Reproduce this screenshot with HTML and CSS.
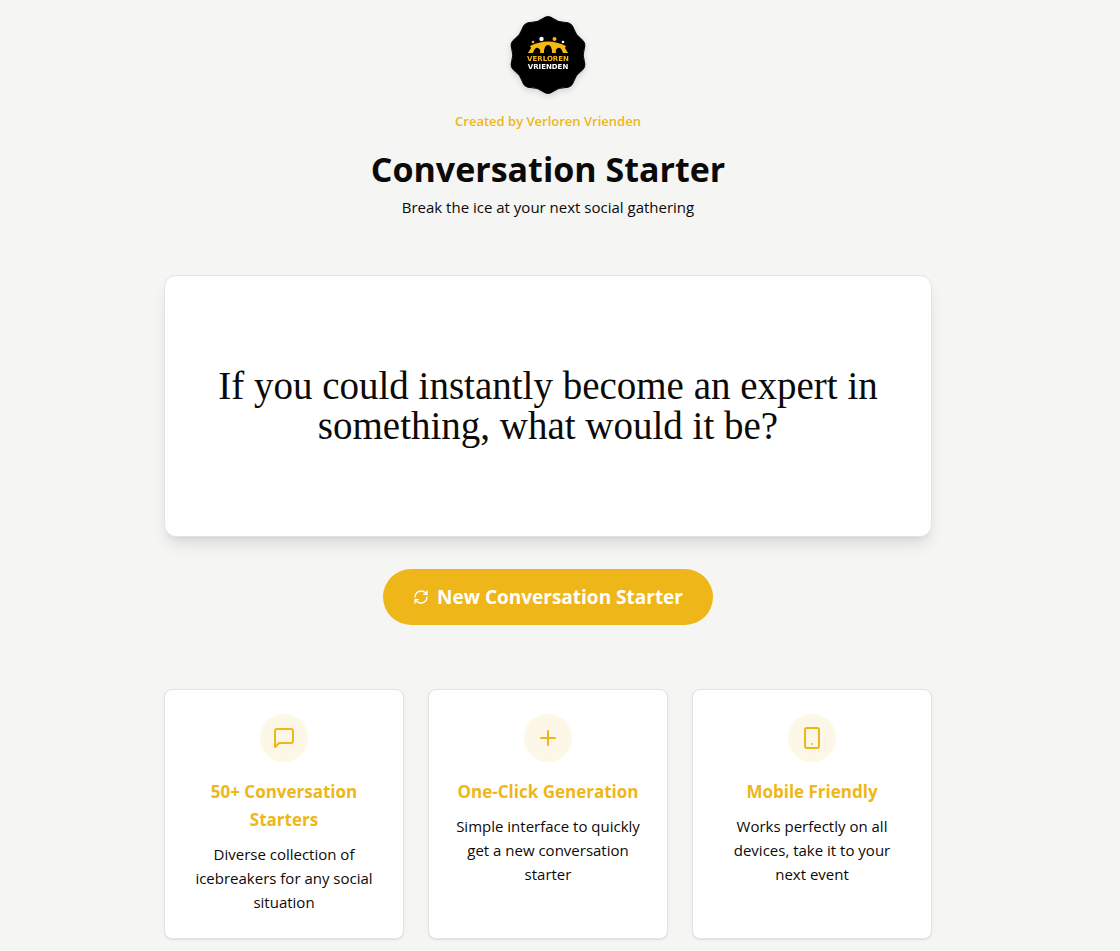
FILE: index.html
```html
<!DOCTYPE html>
<html lang="en">
<head>
<meta charset="utf-8">
<meta name="viewport" content="width=device-width, initial-scale=1">
<title>Conversation Starter</title>
<link rel="stylesheet" href="styles.css">
</head>
<body>
<main class="page">
  <header class="header">
    <svg class="logo" viewBox="-40 -40 80 80" role="img" aria-label="Verloren Vrienden">
      <path d="M-5.300-36.400Q0-40.400 5.300-36.400Q10.500-32.400 17.100-32.600Q23.700-32.700 25.700-26.400Q27.600-20 33-16.300Q38.400-12.500 36.300-6.300Q34.100 0 36.300 6.300Q38.400 12.500 33 16.300Q27.600 20 25.700 26.400Q23.700 32.700 17.100 32.600Q10.500 32.400 5.300 36.400Q0 40.400-5.300 36.400Q-10.500 32.400-17.100 32.600Q-23.700 32.700-25.700 26.400Q-27.600 20-33 16.300Q-38.400 12.500-36.300 6.300Q-34.100 0-36.300-6.300Q-38.400-12.500-33-16.300Q-27.600-20-25.700-26.400Q-23.700-32.700-17.100-32.600Q-10.500-32.400-5.300-36.400Z" stroke="#000" stroke-width="1"/>
      <path fill="#f5b814" d="M-18-9Q0-18 18-9L17-7L20-2H15Q13-8 10-7Q7-6 8-2H4Q4-10 0-10Q-4-10-4-2H-8Q-7-6-10-7Q-13-8-15-2H-20L-17-7Z"/>
      <circle cx="-15" cy="-13" r="1.3" fill="#f5b814"/>
      <circle cx="-6.500" cy="-16" r="2.200" fill="#fff"/>
      <circle cx="6.500" cy="-16" r="2" fill="#f5b814"/>
      <circle cx="15" cy="-13" r="1.300" fill="#fff"/>
      <text class="logo-text logo-text-gold" x="0" y="6">VERLOREN</text>
      <text class="logo-text" x="0" y="14">VRIENDEN</text>
    </svg>
    <p class="credit">Created by Verloren Vrienden</p>
    <h1 class="title">Conversation Starter</h1>
    <p class="subtitle">Break the ice at your next social gathering</p>
  </header>

  <section class="prompt">
    <p class="prompt-text">If you could instantly become an expert in something, what would it be?</p>
  </section>

  <button class="generate" type="button">
    <svg class="generate-icon" viewBox="0 0 24 24" aria-hidden="true"><path d="M3 12a9 9 0 0 1 9-9 9.750 9.750 0 0 1 6.740 2.740L21 8M21 3v5h-5M21 12a9 9 0 0 1-9 9 9.750 9.750 0 0 1-6.740-2.740L3 16M8 16H3v5"/></svg>
    New Conversation Starter
  </button>

  <section class="features">
    <article class="card">
      <span class="badge"><svg class="icon" viewBox="0 0 24 24" aria-hidden="true"><path d="M21 15a2 2 0 0 1-2 2H7l-4 4V5a2 2 0 0 1 2-2h14a2 2 0 0 1 2 2z"/></svg></span>
      <h2 class="card-title">50+ Conversation Starters</h2>
      <p class="card-text">Diverse collection of icebreakers for any social situation</p>
    </article>
    <article class="card">
      <span class="badge"><svg class="icon" viewBox="0 0 24 24" aria-hidden="true"><path d="M12 5v14M5 12h14"/></svg></span>
      <h2 class="card-title">One-Click Generation</h2>
      <p class="card-text">Simple interface to quickly get a new conversation starter</p>
    </article>
    <article class="card">
      <span class="badge"><svg class="icon" viewBox="0 0 24 24" aria-hidden="true"><rect x="5" y="2" width="14" height="20" rx="2"/><path d="M12 18h.01"/></svg></span>
      <h2 class="card-title">Mobile Friendly</h2>
      <p class="card-text">Works perfectly on all devices, take it to your next event</p>
    </article>
  </section>
</main>
</body>
</html>
```
FILE: styles.css
```css
* {
  box-sizing: border-box;
  margin: 0;
}

body {
  padding: 15px 24px 12px 0;
  background: #f5f5f4;
  color: #0c0a09;
  font: 16px/24px "Segoe UI", "Open Sans", "Noto Sans", sans-serif;
}

.page {
  display: flex;
  flex-direction: column;
  align-items: center;
  max-width: 768px;
  margin: 0 auto;
  text-align: center;
}

.header {
  display: flex;
  flex-direction: column;
  align-items: center;
  margin-bottom: 56px;
}

.logo {
  width: 80px;
  height: 80px;
  margin-bottom: 16px;
  filter: drop-shadow(0 2px 3px rgb(0 0 0 / 15%));
}

.logo-text {
  fill: #fff;
  font: 700 7px "DejaVu Sans", sans-serif;
  text-anchor: middle;
}

.logo-text-gold {
  fill: #f5b814;
}

.credit {
  margin-bottom: 16px;
  color: #efb61a;
  font-size: 13px;
  font-weight: 600;
  line-height: 20px;
}

.title {
  margin-bottom: 4px;
  font-size: 34px;
  font-weight: 700;
  line-height: 44px;
}

.subtitle {
  font-size: 15px;
}

.prompt {
  display: flex;
  align-items: center;
  justify-content: center;
  width: 100%;
  min-height: 262px;
  margin-bottom: 32px;
  padding: 40px 48px;
  border: 1px solid #e4e3e2;
  border-radius: 12px;
  background: #fff;
  box-shadow: 0 10px 15px -3px rgb(0 0 0 / 10%), 0 4px 6px -4px rgb(0 0 0 / 10%);
}

.prompt-text {
  font: 39px/40px Georgia, "Liberation Serif", serif;
}

.generate {
  display: flex;
  align-items: center;
  gap: 8px;
  margin-bottom: 64px;
  padding: 14px 30px;
  border: 0;
  border-radius: 28px;
  background: #efb61a;
  color: #fff;
  font: 700 19px/28px "Segoe UI", "Open Sans", "Noto Sans", sans-serif;
  cursor: pointer;
}

.generate-icon,
.icon {
  fill: none;
  stroke: currentColor;
  stroke-width: 2;
  stroke-linecap: round;
  stroke-linejoin: round;
}

.generate-icon {
  width: 16px;
  height: 16px;
}

.icon {
  width: 24px;
  height: 24px;
}

.features {
  display: grid;
  grid-template-columns: repeat(auto-fit, minmax(220px, 1fr));
  gap: 24px;
  width: 100%;
}

.card {
  display: flex;
  flex-direction: column;
  align-items: center;
  padding: 24px;
  border: 1px solid #e4e3e2;
  border-radius: 8px;
  background: #fff;
  box-shadow: 0 1px 2px rgb(0 0 0 / 10%);
}

.badge {
  display: flex;
  align-items: center;
  justify-content: center;
  width: 48px;
  height: 48px;
  margin-bottom: 16px;
  border-radius: 50%;
  background: #fdf7e7;
  color: #efb61a;
}

.card-title {
  margin-bottom: 8px;
  color: #efb61a;
  font-size: 17px;
  font-weight: 700;
  line-height: 28px;
}

.card-text {
  font-size: 15px;
}
```
